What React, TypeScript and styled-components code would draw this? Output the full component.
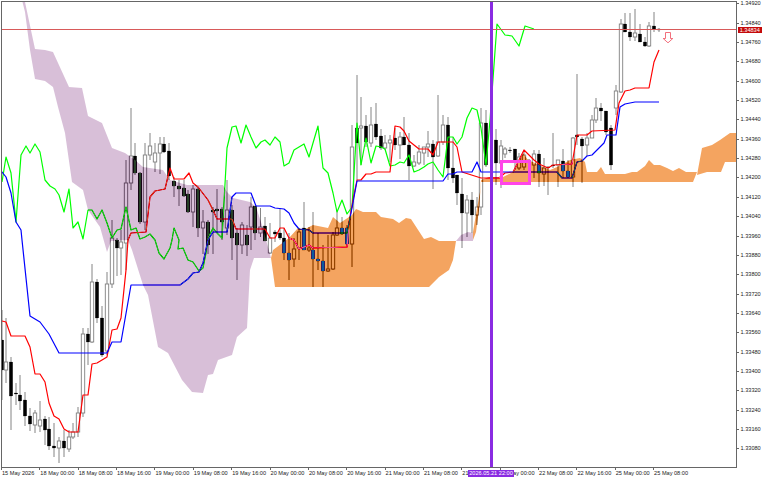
import React from "react";
import styled, { createGlobalStyle } from "styled-components";

const Global = createGlobalStyle`
  html, body { margin: 0; padding: 0; background: #fff; }
  #root { width: 768px; height: 480px; }
`;

const Page = styled.div`
  position: relative;
  width: 768px;
  height: 480px;
  overflow: hidden;
  display: grid;
  grid-template-columns: 737px 1fr;
  grid-template-rows: 468px 1fr;
  background: #fff;
  font-family: "Liberation Sans", Arial, sans-serif;
  font-size: 5.6px;
  color: #222;
`;

const Plot = styled.div`
  grid-column: 1;
  grid-row: 1;
  margin: 1px 0 0 1px;
  border: 1px solid #666;
  box-sizing: border-box;
  overflow: hidden;
  position: relative;
`;

const ChartSvg = styled.svg`
  display: block;
  width: 768px;
  height: 480px;
  margin: -2px 0 0 -2px;
  isolation: isolate;
  background: #fff;
`;

const Cloud = styled.polygon<{ $tone: "purple" | "orange" }>`
  fill: ${(p) => (p.$tone === "purple" ? "#274027" : "#0b5b9f")};
  mix-blend-mode: difference;
`;

const Line = styled.polyline<{ $color: string }>`
  fill: none;
  stroke: ${(p) => p.$color};
  stroke-width: 1.2;
  stroke-linejoin: round;
`;

const Wick = styled.line`
  stroke: #666;
  stroke-width: 0.8;
`;

const Body = styled.rect<{ $filled: boolean }>`
  fill: ${(p) => (p.$filled ? "#000" : "#fff")};
  stroke: ${(p) => (p.$filled ? "#000" : "#808080")};
  stroke-width: ${(p) => (p.$filled ? 0.2 : 0.9)};
`;

const PriceAxis = styled.div`
  grid-column: 2;
  grid-row: 1;
  display: flex;
  flex-direction: column;
  gap: 12.36px;
  padding-top: 0.2px;
`;

const PriceLabel = styled.div`
  height: 7px;
  line-height: 7px;
  display: flex;
  align-items: center;
  gap: 1.5px;
`;

const PriceTick = styled.span`
  width: 2px;
  height: 1px;
  background: #666;
`;

const TimeAxis = styled.div`
  grid-column: 1 / span 2;
  grid-row: 2;
  display: flex;
  padding-left: 1px;
`;

const TimeLabel = styled.div`
  flex: 0 0 38.36px;
  display: flex;
  flex-direction: column;
  white-space: nowrap;
`;

const TimeTick = styled.span`
  width: 1px;
  height: 2px;
  background: #666;
`;

const TimeText = styled.span`
  padding-left: 1px;
  line-height: 7px;
`;

const PriceBadge = styled.div`
  position: absolute;
  left: 738px;
  top: 26.5px;
  width: 23.5px;
  height: 6.5px;
  line-height: 6.5px;
  background: #c40a0a;
  color: #fff;
  text-align: center;
`;

const TimeBadge = styled.div`
  position: absolute;
  left: 468px;
  top: 470px;
  width: 46px;
  height: 7px;
  line-height: 7px;
  background: #8a2be2;
  color: #fff;
  text-align: center;
  white-space: nowrap;
`;

type C = [number, number, number, number, number, 0 | 1];
const candles: C[] = [
  [2, 310, 400, 340, 370, 1], [6, 318, 383, 362, 370, 0], [11, 357, 430, 362, 396, 1], [16, 383, 405, 393, 394, 1],
  [20, 375, 410, 395, 401, 1], [25, 392, 426, 400, 416, 1], [30, 408, 431, 416, 424, 1], [35, 410, 433, 413, 425, 0],
  [40, 401, 432, 420, 426, 0], [45, 416, 445, 419, 430, 1], [49, 417, 450, 429, 446, 1], [54, 423, 457, 446, 448, 1],
  [59, 437, 463, 441, 448, 0], [64, 430, 457, 441, 448, 1], [69, 430, 452, 437, 449, 0], [73, 423, 439, 432, 437, 0],
  [78, 407, 437, 413, 432, 0], [83, 328, 417, 334, 413, 0], [88, 328, 365, 334, 342, 1], [92, 264, 343, 282, 342, 0],
  [97, 279, 323, 282, 318, 1], [102, 306, 357, 318, 355, 1], [107, 272, 355, 284, 351, 0], [112, 220, 288, 238, 284, 0],
  [117, 238, 276, 240, 248, 1], [121, 230, 275, 242, 248, 0], [126, 160, 270, 183, 243, 0], [131, 108, 190, 156, 183, 0],
  [135, 143, 175, 156, 173, 1], [140, 172, 224, 173, 222, 1], [145, 143, 230, 155, 222, 0], [150, 133, 160, 146, 155, 0],
  [155, 143, 172, 153, 162, 0], [160, 137, 174, 144, 153, 0], [164, 137, 153, 144, 152, 1], [169, 143, 180, 151, 176, 1],
  [174, 177, 197, 181, 186, 1], [179, 180, 206, 186, 189, 1], [184, 180, 197, 188, 196, 1], [188, 190, 213, 194, 212, 1],
  [193, 185, 227, 189, 212, 0], [198, 187, 237, 189, 228, 1], [203, 210, 254, 222, 228, 0], [208, 220, 254, 222, 245, 1],
  [213, 207, 254, 210, 212, 1], [217, 189, 233, 209, 211, 1], [222, 207, 240, 209, 222, 1], [227, 180, 235, 210, 228, 0],
  [232, 205, 260, 210, 238, 1], [237, 228, 280, 233, 245, 1], [242, 222, 254, 225, 245, 0], [247, 225, 256, 235, 245, 1],
  [251, 197, 250, 207, 227, 0], [255, 206, 240, 206, 233, 1], [260.5, 208, 237, 227, 233, 0], [265, 217, 240, 226, 241, 1],
  [270, 223, 254, 238, 253, 0], [275, 230, 242, 232, 234, 1], [280, 208, 240, 233, 238, 1], [284, 228, 260, 238, 253, 1],
  [289, 233, 280, 253, 260, 1], [294, 238, 267, 249, 259, 0], [299, 228, 260, 232, 248, 0], [304, 202, 250, 228, 250, 1],
  [309, 227, 252, 248, 250, 0], [313, 212, 287, 250, 259, 1], [318, 233, 270, 259, 261, 1], [323, 245, 287, 261, 271, 1],
  [328, 235, 272, 269, 271, 0], [333, 232, 270, 235, 269, 0], [337, 210, 236, 228, 235, 0], [342, 217, 235, 228, 234, 1],
  [347, 225, 245, 228, 244, 1], [352, 125, 267, 147, 244, 0], [357, 75, 180, 128, 143, 1], [361, 97, 165, 126, 128, 0],
  [366, 115, 147, 126, 142, 1], [371, 107, 147, 125, 143, 0], [376, 103, 140, 124, 137, 1], [381, 129, 150, 136, 148, 1],
  [385, 135, 150, 143, 148, 0], [390, 135, 162, 140, 143, 0], [395, 128, 150, 138, 145, 1], [400, 132, 159, 137, 145, 0],
  [404, 117, 145, 137, 145, 1], [409, 133, 180, 145, 166, 1], [414, 155, 167, 162, 166, 0], [419, 145, 165, 152, 163, 0],
  [424, 147, 165, 147, 153, 0], [428, 131, 157, 144, 147, 0], [433, 140, 189, 144, 157, 1], [438, 95, 157, 142, 156, 0],
  [443, 115, 145, 125, 142, 0], [448, 117, 180, 125, 168, 1], [453, 137, 183, 168, 178, 1], [457, 175, 205, 175, 193, 1],
  [462, 178, 248, 194, 213, 1], [467, 195, 237, 200, 213, 0], [472, 192, 233, 200, 215, 1], [477, 197, 225, 207, 215, 0],
  [481, 108, 215, 123, 207, 0], [486, 110, 167, 123, 165, 1], [496, 129, 185, 140, 163, 1], [501, 140, 188, 146, 163, 0],
  [505, 147, 158, 149, 154, 0], [510, 147, 153, 150, 150.5, 1], [515, 149, 170, 149, 162, 1], [519, 153, 170, 157, 168, 0],
  [524, 150, 170, 155, 167, 0], [529, 159, 170, 160, 161, 1], [534, 150, 178, 154, 165, 0], [539, 150, 187, 154, 173, 1],
  [544, 158, 186, 168, 174, 0], [548, 166, 195, 167, 168, 1], [553, 133, 168, 165, 166, 1], [558, 160, 187, 160, 165, 0],
  [563, 149, 178, 161, 171, 1], [568, 160, 178, 171, 177, 1], [573, 137, 187, 138, 177, 0], [577, 74, 145, 135, 137, 1],
  [582, 137, 183, 139, 146, 1], [587, 133, 156, 138, 145, 0], [592, 115, 138, 120, 138, 0], [596, 98, 123, 108, 120, 0],
  [601, 103, 121, 108, 111, 1], [606, 111, 135, 111, 132, 1], [611, 125, 170, 128, 165, 1], [616, 85, 115, 91, 108, 0],
  [621, 19, 93, 24, 92, 0], [625, 13, 32, 24, 32, 1], [630, 13, 41, 32, 37, 1], [635, 9, 41, 33, 37, 0],
  [640, 24, 42, 34, 42, 1], [645, 37, 47, 42, 46, 1], [649, 22, 47, 26, 46, 0], [654, 12, 32, 26, 29, 1], [659, 28, 32, 29, 30, 1],
];

const green = "2,182 6,157 11,173 16,222 21,155 26,146 30,153 35,144 40,152 45,180 50,186 55,189 59,195 64,212 69,189 73,228 78,222 83,239 88,210 92,210 97,219 102,210 107,223 112,238 117,230 121,229 126,207 131,230 136,228 140,239 145,237 150,234 155,240 159,253 164,259 170,248 172,240 174,228 179,240 178,249 183,248 188,260 193,262 199,271 203,268 206,253 208,238 213,228 217,233 222,238 227,148 232,127 236,126 241,143 246,125 251,137 256,148 261,142 265,140 270,145 275,137 280,142 284,166 289,163 294,150 299,147 304,144 309,157 313,143 318,126 323,168 328,173 333,193 337,212 342,200 347,214 352,207 357,123 361,165 366,138 371,163 376,146 381,147 385,149 390,166 395,165 400,162 404,163 409,155 414,172 419,170 424,167 428,164 433,162 438,170 443,177 448,137 453,137 457,144 462,137 467,118 472,108 477,110 481,128 486,165 490,120 497,24 505,35 512,36 519,46 525,26 534,29";
const red = "2,321 6,322 11,336 25,336 30,347 35,374 40,374 45,382 49,403 54,416 59,419 64,429 69,432 78,432 83,395 88,395 92,364 97,363 107,357 112,330 117,329 121,318 126,270 128,240 131,233 146,232 150,197 155,191 165,189 170,168 174,179 184,179 189,173 193,183 198,187 208,200 213,210 217,219 232,219 236,229 256,229 265,229 270,238 275,238 280,228 284,228 289,238 294,240 299,249 309,245 313,248 347,247 349,223 353,200 357,180 361,180 366,174 371,174 376,172 390,172 395,126 400,127 404,131 409,141 419,149 428,149 433,155 438,142 453,142 457,147 462,172 481,178 499,178 505,173 513,172 524,150 534,160 539,164 548,168 553,165 572,164 577,135 587,135 592,131 615,130 619,103 625,91 630,90 635,88 649,88 654,62 659,50";
const blue = "0,171 2,172 6,177 11,193 16,222 21,230 22,240 30,316 40,322 49,334 59,353 107,353 112,342 121,342 131,285 180,285 188,279 193,273 199,272 203,263 208,240 213,232 227,232 232,197 236,193 251,193 256,206 270,206 275,208 284,209 289,213 294,223 299,229 309,230 313,233 347,233 352,208 357,181 443,181 448,174 453,174 457,172 472,172 477,162 481,172 557,172 562,178 572,178 577,162 582,161 587,156 592,155 604,143 607,135 616,135 620,107 625,104 635,102 659,102";

const purple1 = "22,0 25,2 35,49 45,50 53,52 69,87 82,88 88,116 102,123 112,148 125,153 135,160 143,167 163,170 170,180 187,185 223,185 227,192 233,198 250,202 256,207 262,225 271,258 254,258 250,270 247,328 237,337 232,355 218,360 213,374 208,375 203,393 192,392 182,380 168,353 158,347 148,295 143,285 132,250 128,240 111,241 107,252 100,227 88,210 83,190 72,182 65,133 58,107 53,87 45,81 35,79 30,50 25,12";
const purple2 = "456,241 461,235 468,232 473,233 473,241";
const orange1 = "271,258 273,250 289,238 298,228 303,230 313,225 328,228 333,217 340,223 352,215 356,209 363,212 376,212 381,217 393,219 399,223 406,218 411,219 424,239 431,237 439,241 456,241 453,260 449,270 439,277 429,287 275,287";
const orange2 = "473,240 473,232 476,214 480,192 481,180 489,177 499,177 503,177 513,172 523,153 528,160 535,163 543,167 550,170 557,167 570,160 580,158 585,162 587,172 597,172 601,167 605,174 625,174 632,172 637,172 645,166 649,160 654,165 660,165 667,168 673,171 679,168 686,172 697,172 693,182 481,182 479,210 476,232";
const orange3 = "697,175 702,148 712,145 720,140 730,133 736,133 736,162 725,162 721,172 707,172";

const prices = Array.from({ length: 24 }, (_, i) => (1.3492 - i * 0.0008).toFixed(5));
const times = [
  "15 May 2026", "18 May 00:00", "18 May 08:00", "18 May 16:00", "19 May 00:00", "19 May 08:00",
  "19 May 16:00", "20 May 00:00", "20 May 08:00", "20 May 16:00", "21 May 00:00", "21 May 08:00",
  "21 May 16:00", "22 May 00:00", "22 May 08:00", "22 May 16:00", "25 May 00:00", "25 May 08:00",
];

export default function App() {
  return (
    <Page>
      <Global />
      <Plot>
        <ChartSvg viewBox="0 0 768 480">
          {candles.map(([x, hi, lo, t, b, f]) => (
            <g key={x}>
              <Wick x1={x} x2={x} y1={hi} y2={lo} />
              <Body $filled={!!f} x={x - 1.7} y={t} width={3.4} height={Math.max(b - t, 0.8)} />
            </g>
          ))}
          <Line $color="#00ff00" points={green} />
          <Line $color="#ff0000" points={red} />
          <Line $color="#0000ff" points={blue} />
          <Cloud $tone="purple" points={purple1} />
          <Cloud $tone="purple" points={purple2} />
          <Cloud $tone="orange" points={orange1} />
          <Cloud $tone="orange" points={orange2} />
          <Cloud $tone="orange" points={orange3} />
          <line x1="1" x2="737" y1="29.5" y2="29.5" stroke="#d85a5a" strokeWidth="1" />
          <rect x="501.5" y="161.5" width="28" height="22" fill="none" stroke="#ff45e8" strokeWidth="3" />
          <line x1="491.5" x2="491.5" y1="0" y2="480" stroke="#8a2be2" strokeWidth="3" />
          <path d="M665.5 32.5H670.5V38.5H672.8L668 42.8L663.2 38.5H665.5Z" fill="#fff" stroke="#f0606e" strokeWidth="0.9" />
        </ChartSvg>
      </Plot>
      <PriceAxis>
        {prices.map((p) => (
          <PriceLabel key={p}>
            <PriceTick />
            {p}
          </PriceLabel>
        ))}
      </PriceAxis>
      <TimeAxis>
        {times.map((t) => (
          <TimeLabel key={t}>
            <TimeTick />
            <TimeText>{t}</TimeText>
          </TimeLabel>
        ))}
      </TimeAxis>
      <PriceBadge>1.34834</PriceBadge>
      <TimeBadge>2026.05.21 22:00</TimeBadge>
    </Page>
  );
}
